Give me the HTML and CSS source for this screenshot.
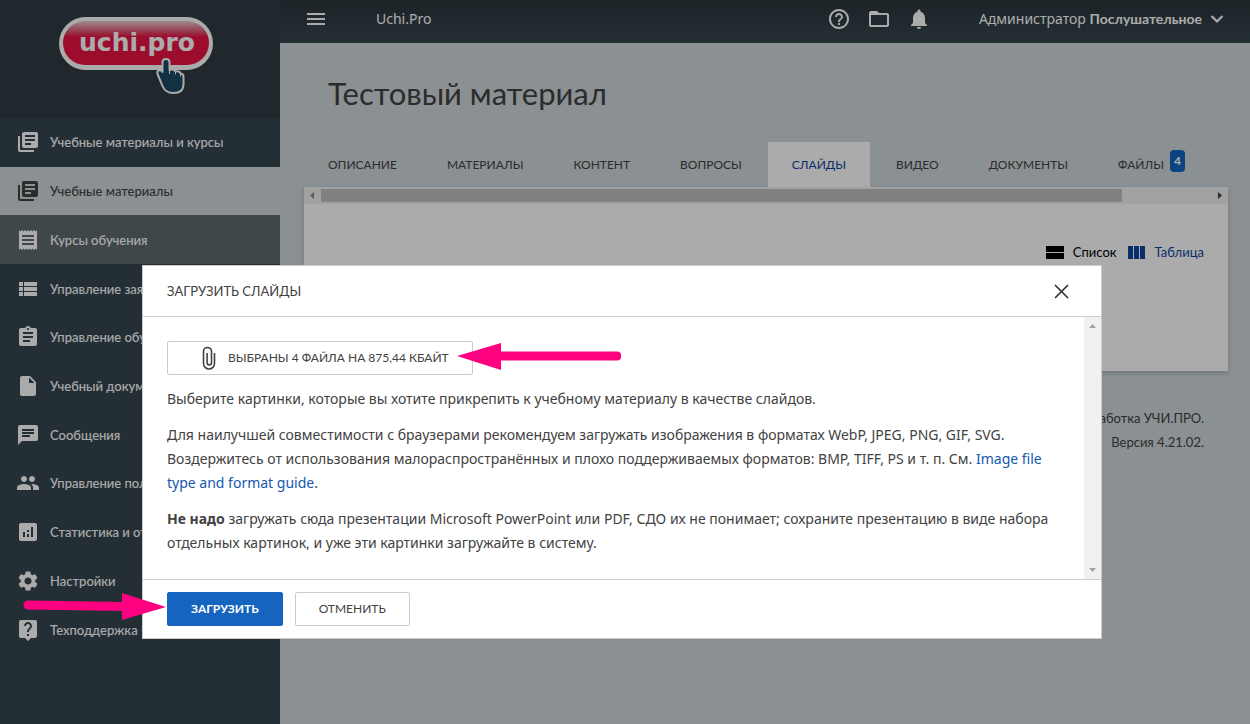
FILE: index.html
```html
<!DOCTYPE html>
<html lang="ru">
<head>
<meta charset="utf-8">
<title>Тестовый материал</title>
<link rel="stylesheet" href="styles.css">
</head>
<body>
<div class="app">
  <aside class="sidebar">
    <a class="brand" href="#" aria-label="uchi.pro">
      <svg width="156" height="80" viewBox="0 0 156 80">
        <defs>
          <linearGradient id="gloss" x1="0" y1="0" x2="0" y2="1">
            <stop offset="0" stop-color="#e8cfd4"/>
            <stop offset=".3" stop-color="#e0345a"/>
            <stop offset=".36" stop-color="#e91443"/>
            <stop offset="1" stop-color="#e91443"/>
          </linearGradient>
        </defs>
        <rect x="1" y="1" width="154" height="53" rx="26.500" fill="#fff"/>
        <rect x="5" y="5" width="146" height="44" rx="22" fill="url(#gloss)"/>
        <text class="brand-text" x="79" y="35" text-anchor="middle">uchi.pro</text>
        <path d="M104.500 46c0-4 7-4 7 0v8c3-1 5 0 6 1.500 3-.5 4.500.5 5 2 2.500 0 3 1.500 3 3.500v7c0 6-4 9-10 9-6 0-9-2-11-7l-5-12c-1-4 3-5 5-2z" fill="#1c4a63" stroke="#fff" stroke-width="2" stroke-linejoin="round"/>
        <path d="M111.500 54v4M117.500 55.500v3M122.500 57.500v3" stroke="#fff" fill="none"/>
      </svg>
    </a>
    <nav class="menu">
      <a class="item" href="#"><svg class="icon" viewBox="0 0 24 24"><path d="M4 6H2v14c0 1.100.9 2 2 2h14v-2H4V6zm16-4H8c-1.100 0-2 .9-2 2v12c0 1.100.9 2 2 2h12c1.100 0 2-.9 2-2V4c0-1.100-.9-2-2-2zm-1 9H9V9h10v2zm-4 4H9v-2h6v2zm4-8H9V5h10v2z"/></svg>Учебные материалы и курсы</a>
      <a class="item item-active" href="#"><svg class="icon" viewBox="0 0 24 24"><path d="M4 6H2v14c0 1.100.9 2 2 2h14v-2H4V6zm16-4H8c-1.100 0-2 .9-2 2v12c0 1.100.9 2 2 2h12c1.100 0 2-.9 2-2V4c0-1.100-.9-2-2-2zm-1 9H9V9h10v2zm-4 4H9v-2h6v2zm4-8H9V5h10v2z"/></svg>Учебные материалы</a>
      <a class="item item-sub" href="#"><svg class="icon" viewBox="0 0 24 24"><path d="M18 17H6v-2h12v2zm0-4H6v-2h12v2zm0-4H6V7h12v2zM3 22l1.500-1.500L6 22l1.500-1.500L9 22l1.500-1.500L12 22l1.500-1.500L15 22l1.500-1.500L18 22l1.500-1.500L21 22V2l-1.500 1.500L18 2l-1.500 1.500L15 2l-1.500 1.500L12 2l-1.500 1.500L9 2 7.500 3.500 6 2 4.500 3.500 3 2v20z"/></svg>Курсы обучения</a>
      <a class="item" href="#"><svg class="icon" viewBox="0 0 24 24"><path d="M3 14h4v-4H3v4zm0 5h4v-4H3v4zM3 9h4V5H3v4zm5 5h13v-4H8v4zm0 5h13v-4H8v4zM8 5v4h13V5H8z"/></svg>Управление заявками</a>
      <a class="item" href="#"><svg class="icon" viewBox="0 0 24 24"><path d="M19 3h-4.180C14.400 1.840 13.300 1 12 1s-2.400.84-2.820 2H5c-1.100 0-2 .9-2 2v14c0 1.100.9 2 2 2h14c1.100 0 2-.9 2-2V5c0-1.100-.9-2-2-2zm-7 0c.55 0 1 .45 1 1s-.45 1-1 1-1-.45-1-1 .45-1 1-1zm2 14H7v-2h7v2zm3-4H7v-2h10v2zm0-4H7V7h10v2z"/></svg>Управление обучением</a>
      <a class="item" href="#"><svg class="icon" viewBox="0 0 24 24"><path d="M6 2c-1.100 0-1.990.9-1.990 2L4 20c0 1.100.89 2 1.990 2H18c1.100 0 2-.9 2-2V8l-6-6H6zm7 7V3.500L18.500 9H13z"/></svg>Учебный документооборот</a>
      <a class="item" href="#"><svg class="icon" viewBox="0 0 24 24"><path d="M20 2H4c-1.100 0-1.990.9-1.990 2L2 22l4-4h14c1.100 0 2-.9 2-2V4c0-1.100-.9-2-2-2zM6 9h12v2H6V9zm8 5H6v-2h8v2zm4-6H6V6h12v2z"/></svg>Сообщения</a>
      <a class="item" href="#"><svg class="icon" viewBox="0 0 24 24"><path d="M16 11c1.660 0 2.990-1.340 2.990-3S17.660 5 16 5c-1.660 0-3 1.340-3 3s1.340 3 3 3zm-8 0c1.660 0 2.990-1.340 2.990-3S9.660 5 8 5C6.340 5 5 6.340 5 8s1.340 3 3 3zm0 2c-2.330 0-7 1.170-7 3.500V19h14v-2.500c0-2.330-4.670-3.500-7-3.500zm8 0c-.29 0-.62.020-.97.050 1.160.84 1.970 1.970 1.970 3.450V19h6v-2.500c0-2.330-4.670-3.500-7-3.500z"/></svg>Управление пользователями</a>
      <a class="item" href="#"><svg class="icon" viewBox="0 0 24 24"><path d="M19 3H5c-1.100 0-2 .9-2 2v14c0 1.100.9 2 2 2h14c1.100 0 2-.9 2-2V5c0-1.100-.9-2-2-2zM9 17H7v-5h2v5zm4 0h-2v-3h2v3zm0-5h-2v-2h2v2zm4 5h-2V7h2v10z"/></svg>Статистика и отчёты</a>
      <a class="item" href="#"><svg class="icon" viewBox="0 0 24 24"><path d="M19.140 12.940c.04-.3.060-.61.060-.94 0-.32-.02-.64-.07-.94l2.030-1.580c.18-.14.23-.41.12-.61l-1.920-3.320c-.12-.22-.37-.29-.59-.22l-2.390.96c-.5-.38-1.030-.7-1.620-.94l-.36-2.540c-.04-.24-.24-.41-.48-.41h-3.840c-.24 0-.43.17-.47.41l-.36 2.540c-.59.24-1.130.57-1.620.94l-2.390-.96c-.22-.08-.47 0-.59.220L2.740 8.870c-.12.21-.08.47.12.61l2.030 1.580c-.05.3-.09.63-.09.94s.02.64.07.94l-2.030 1.580c-.18.14-.23.41-.12.61l1.920 3.320c.12.220.37.29.59.220l2.390-.96c.5.38 1.030.7 1.620.94l.36 2.540c.05.24.24.41.48.41h3.840c.24 0 .44-.17.47-.41l.36-2.540c.59-.24 1.130-.56 1.620-.94l2.390.96c.22.080.47 0 .59-.22l1.920-3.320c.12-.22.070-.47-.12-.61l-2.010-1.580zM12 15.600c-1.980 0-3.600-1.620-3.600-3.600s1.620-3.600 3.600-3.600 3.600 1.620 3.600 3.600-1.620 3.600-3.600 3.600z"/></svg>Настройки</a>
      <a class="item" href="#"><svg class="icon" viewBox="0 0 24 24"><path d="M19 2H5c-1.110 0-2 .9-2 2v14c0 1.100.89 2 2 2h4l3 3 3-3h4c1.100 0 2-.9 2-2V4c0-1.100-.9-2-2-2zm-6 16h-2v-2h2v2zm2.070-7.750l-.9.920C13.450 11.900 13 12.500 13 14h-2v-.5c0-1.100.45-2.100 1.170-2.830l1.240-1.260c.37-.36.59-.86.59-1.410 0-1.100-.9-2-2-2s-2 .9-2 2H8c0-2.210 1.790-4 4-4s4 1.790 4 4c0 .88-.36 1.680-.93 2.250z"/></svg>Техподдержка Uchi.Pro</a>
    </nav>
  </aside>

  <div class="content">
    <header class="topbar">
      <button class="icon-button" type="button" aria-label="Меню"><svg class="icon" viewBox="0 0 24 24"><path d="M3 18h18v-2H3v2zm0-5h18v-2H3v2zm0-7v2h18V6H3z"/></svg></button>
      <span class="site">Uchi.Pro</span>
      <div class="tools">
        <button class="icon-button" type="button" aria-label="Справка"><svg class="icon" viewBox="0 0 24 24"><path d="M11 18h2v-2h-2v2zm1-16C6.480 2 2 6.480 2 12s4.480 10 10 10 10-4.480 10-10S17.520 2 12 2zm0 18c-4.410 0-8-3.590-8-8s3.590-8 8-8 8 3.590 8 8-3.590 8-8 8zm0-14c-2.210 0-4 1.790-4 4h2c0-1.100.9-2 2-2s2 .9 2 2c0 2-3 1.750-3 5h2c0-2.250 3-2.500 3-5 0-2.210-1.790-4-4-4z"/></svg></button>
        <button class="icon-button" type="button" aria-label="Папки"><svg class="icon" viewBox="0 0 24 24"><path d="M20 6h-8l-2-2H4c-1.100 0-1.990.9-1.990 2L2 18c0 1.100.9 2 2 2h16c1.100 0 2-.9 2-2V8c0-1.100-.9-2-2-2zm0 12H4V8h16v10z"/></svg></button>
        <button class="icon-button" type="button" aria-label="Уведомления"><svg class="icon" viewBox="0 0 24 24"><path d="M12 22c1.100 0 2-.9 2-2h-4c0 1.100.89 2 2 2zm6-6v-5c0-3.070-1.640-5.640-4.500-6.320V4c0-.83-.67-1.500-1.500-1.500s-1.500.67-1.500 1.500v.68C7.630 5.360 6 7.920 6 11v5l-2 2v1h16v-1l-2-2z"/></svg></button>
      </div>
      <button class="user" type="button"><span>Администратор <b class="user-role">Послушательное</b></span><svg width="14" height="10" viewBox="0 0 14 10"><path d="M1.500 2l5.500 5.500L12.500 2" fill="none" stroke="#fff" stroke-width="2.200"/></svg></button>
    </header>

    <main class="page">
      <h1 class="title">Тестовый материал</h1>
      <nav class="tabs">
        <a class="tab" href="#">ОПИСАНИЕ</a>
        <a class="tab" href="#">МАТЕРИАЛЫ</a>
        <a class="tab" href="#">КОНТЕНТ</a>
        <a class="tab" href="#">ВОПРОСЫ</a>
        <a class="tab tab-current" href="#">СЛАЙДЫ</a>
        <a class="tab" href="#">ВИДЕО</a>
        <a class="tab" href="#">ДОКУМЕНТЫ</a>
        <a class="tab" href="#">ФАЙЛЫ <span class="badge">4</span></a>
      </nav>
      <section class="panel">
        <div class="hscroll">
          <svg width="17" height="17" viewBox="0 0 17 17"><path d="M10 5v7L6 8.500z" fill="#8a8a8a"/></svg>
          <div class="hscroll-track"><div class="hscroll-thumb"></div></div>
          <svg width="17" height="17" viewBox="0 0 17 17"><path d="M7 5v7l4-3.500z" fill="#404040"/></svg>
        </div>
        <div class="views">
          <a class="view" href="#"><svg width="18" height="14" viewBox="0 0 18 14"><path d="M0 1h18v6H0zM0 8h18v6H0z"/></svg>Список</a>
          <a class="view view-link" href="#"><svg width="18" height="14" viewBox="0 0 18 14"><path d="M0 1h5v13H0zM6 1h5v13H6zM12 1h5v13h-5z"/></svg>Таблица</a>
        </div>
      </section>
      <footer class="credits">
        <p>Разработка УЧИ.ПРО.</p>
        <p>Версия 4.21.02.</p>
      </footer>
    </main>
  </div>
</div>

<div class="overlay">
  <section class="dialog" role="dialog" aria-modal="true" aria-labelledby="dialog-title">
    <header class="dialog-head">
      <h2 class="dialog-title" id="dialog-title">ЗАГРУЗИТЬ СЛАЙДЫ</h2>
      <button class="close" type="button" aria-label="Закрыть"><svg width="16" height="16" viewBox="0 0 16 16"><path d="M2 2l13 13M15 2L2 15" stroke="#333" stroke-width="1.700"/></svg></button>
    </header>
    <div class="dialog-body">
      <div class="dialog-text">
        <button class="file" type="button"><svg class="clip" width="14" height="24" viewBox="0 0 14 24"><path d="M12.500 7v10.500a5.500 5.500 0 0 1-11 0V5.500a4 4 0 0 1 8 0v11.200a2.200 2.200 0 0 1-4.400 0V7" fill="none" stroke="#424242" stroke-width="1.600"/></svg>ВЫБРАНЫ 4 ФАЙЛА НА 875,44 КБАЙТ</button>
        <p>Выберите картинки, которые вы хотите прикрепить к учебному материалу в качестве слайдов.</p>
        <p>Для наилучшей совместимости с браузерами рекомендуем загружать изображения в форматах WebP, JPEG, PNG, GIF, SVG. Воздержитесь от использования малораспространённых и плохо поддерживаемых форматов: BMP, TIFF, PS и т. п. См. <a class="link" href="#">Image file type and format guide</a>.</p>
        <p><b>Не надо</b> загружать сюда презентации Microsoft PowerPoint или PDF, СДО их не понимает; сохраните презентацию в виде набора отдельных картинок, и уже эти картинки загружайте в систему.</p>
      </div>
      <div class="vscroll">
        <svg width="17" height="17" viewBox="0 0 17 17"><path d="M5 11h7L8.500 7z" fill="#a3a3a3"/></svg>
        <svg width="17" height="17" viewBox="0 0 17 17"><path d="M5 6h7l-3.500 4z" fill="#a3a3a3"/></svg>
      </div>
    </div>
    <footer class="dialog-foot">
      <button class="btn btn-primary" type="button">ЗАГРУЗИТЬ</button>
      <button class="btn" type="button">ОТМЕНИТЬ</button>
    </footer>
  </section>
</div>

<svg class="pointer pointer-file" width="165" height="28" viewBox="0 0 165 28"><path d="M44 14h117" stroke="#ff0080" stroke-width="9" stroke-linecap="round"/><path d="M1 14L45 1v27z" fill="#ff0080"/></svg>
<svg class="pointer pointer-upload" width="145" height="28" viewBox="0 0 145 28"><path d="M6 12l97 1.500" stroke="#ff0080" stroke-width="9" stroke-linecap="round"/><path d="M144 14L100 0v27z" fill="#ff0080"/></svg>
</body>
</html>
```
FILE: styles.css
```css
* {
  box-sizing: border-box;
}

body {
  margin: 0;
  font-family: Lato, "Noto Sans", sans-serif;
  font-size: 13px;
  line-height: 24px;
  color: #424242;
  background: #cfd8dc;
}

a {
  color: inherit;
  text-decoration: none;
}

button {
  font: inherit;
  color: inherit;
  margin: 0;
  padding: 0;
  border: 0;
  background: none;
  cursor: pointer;
}

h1,
h2,
p {
  margin: 0;
  font-weight: 400;
}

.app {
  display: flex;
  min-height: 100vh;
}

.icon {
  display: block;
  width: 24px;
  height: 24px;
  fill: currentColor;
}

.sidebar {
  flex: none;
  width: 280px;
  background: #37474f;
}

.brand {
  display: flex;
  justify-content: center;
  height: 118px;
  padding: 16px 8px 0 0;
  background: #303c43;
}

.brand-text {
  font: 700 25px "DejaVu Sans", sans-serif;
  fill: #fff;
}

.menu {
  display: grid;
  grid-auto-rows: 1fr;
  height: 536px;
}

.item {
  display: flex;
  align-items: center;
  gap: 10px;
  padding: 0 16px;
  font-weight: 500;
  color: #fff;
  white-space: nowrap;
  overflow: hidden;
}

.item-active {
  color: #424242;
  background: #cfd8dc;
}

.item-sub {
  background: #5f6a70;
}

.content {
  flex: 1;
  min-width: 0;
}

.topbar {
  display: flex;
  align-items: center;
  height: 43px;
  padding: 0 26px 5px 24px;
  font-family: "Noto Sans", sans-serif;
  font-size: 14px;
  color: #fff;
  background: linear-gradient(#2a353a, #37474f);
}

.site {
  margin-left: 48px;
}

.tools {
  display: flex;
  gap: 16px;
  margin-left: auto;
}

.user {
  display: flex;
  align-items: center;
  gap: 8px;
  margin-left: 48px;
}

.user-role {
  font-family: Lato, sans-serif;
}

.page {
  padding: 32px 22px 0 24px;
}

.title {
  padding: 0 24px;
  font-size: 31px;
  line-height: 36px;
}

.tabs {
  display: flex;
  justify-content: space-between;
  margin-top: 31px;
  padding-right: 19px;
  font-size: 12px;
}

.tab {
  display: flex;
  align-items: center;
  gap: 6px;
  height: 45px;
  padding: 0 24px;
  white-space: nowrap;
}

.tab-current {
  color: #0d47a1;
  background: #fff;
}

.badge {
  margin-bottom: 8px;
  padding: 0 4px;
  border-radius: 4px;
  font-weight: 700;
  line-height: 22px;
  color: #fff;
  background: #1565c0;
}

.panel {
  min-height: 184px;
  background: #fff;
  box-shadow: 0 2px 5px rgba(0, 0, 0, .2);
}

.hscroll {
  display: flex;
  height: 17px;
  background: #f1f1f1;
}

.hscroll-track {
  flex: 1;
  padding: 2px 0;
}

.hscroll-thumb {
  width: 90%;
  height: 13px;
  background: #c1c1c1;
}

.views {
  display: flex;
  justify-content: flex-end;
  gap: 11px;
  padding: 36px 24px 0;
}

.view {
  display: flex;
  align-items: center;
  gap: 9px;
  color: #000;
}

.view svg {
  fill: currentColor;
}

.view-link {
  color: #0d47a1;
}

.credits {
  padding: 35px 24px 0;
  text-align: right;
}

.overlay {
  position: fixed;
  inset: 0;
  display: flex;
  justify-content: center;
  align-items: flex-start;
  padding: 265px 6px 0 0;
  background: rgba(0, 0, 0, .33);
}

.dialog {
  width: 960px;
  max-width: 100%;
  border: 1px solid #ccc;
  background: #fff;
}

.dialog-head {
  display: flex;
  justify-content: space-between;
  align-items: center;
  height: 51px;
  padding: 0 32px 0 24px;
  border-bottom: 1px solid #ccc;
}

.dialog-title {
  font-size: 13px;
}

.close svg {
  display: block;
}

.dialog-body {
  display: flex;
}

.dialog-text {
  flex: 1;
  padding: 24px;
}

.dialog-text p {
  margin-top: 12px;
  font-family: "Noto Sans", sans-serif;
  font-size: 14px;
}

.file {
  display: flex;
  align-items: center;
  gap: 12px;
  height: 34px;
  padding: 0 23px 0 34px;
  border: 1px solid #ccc;
  border-radius: 2px;
  font-size: 12px;
}

.link {
  color: #1558b0;
}

.vscroll {
  display: flex;
  flex-direction: column;
  justify-content: space-between;
  width: 17px;
  background: #f1f1f1;
}

.dialog-foot {
  display: flex;
  gap: 12px;
  padding: 12px 24px;
  border-top: 1px solid #ccc;
}

.btn {
  height: 34px;
  padding: 0 23px;
  border: 1px solid #ccc;
  border-radius: 2px;
  font-size: 12px;
}

.btn-primary {
  border-color: #1565c0;
  font-weight: 700;
  color: #fff;
  background: #1565c0;
}

.pointer {
  position: fixed;
}

.pointer-file {
  left: 456px;
  top: 342px;
}

.pointer-upload {
  left: 22px;
  top: 593px;
}
```
